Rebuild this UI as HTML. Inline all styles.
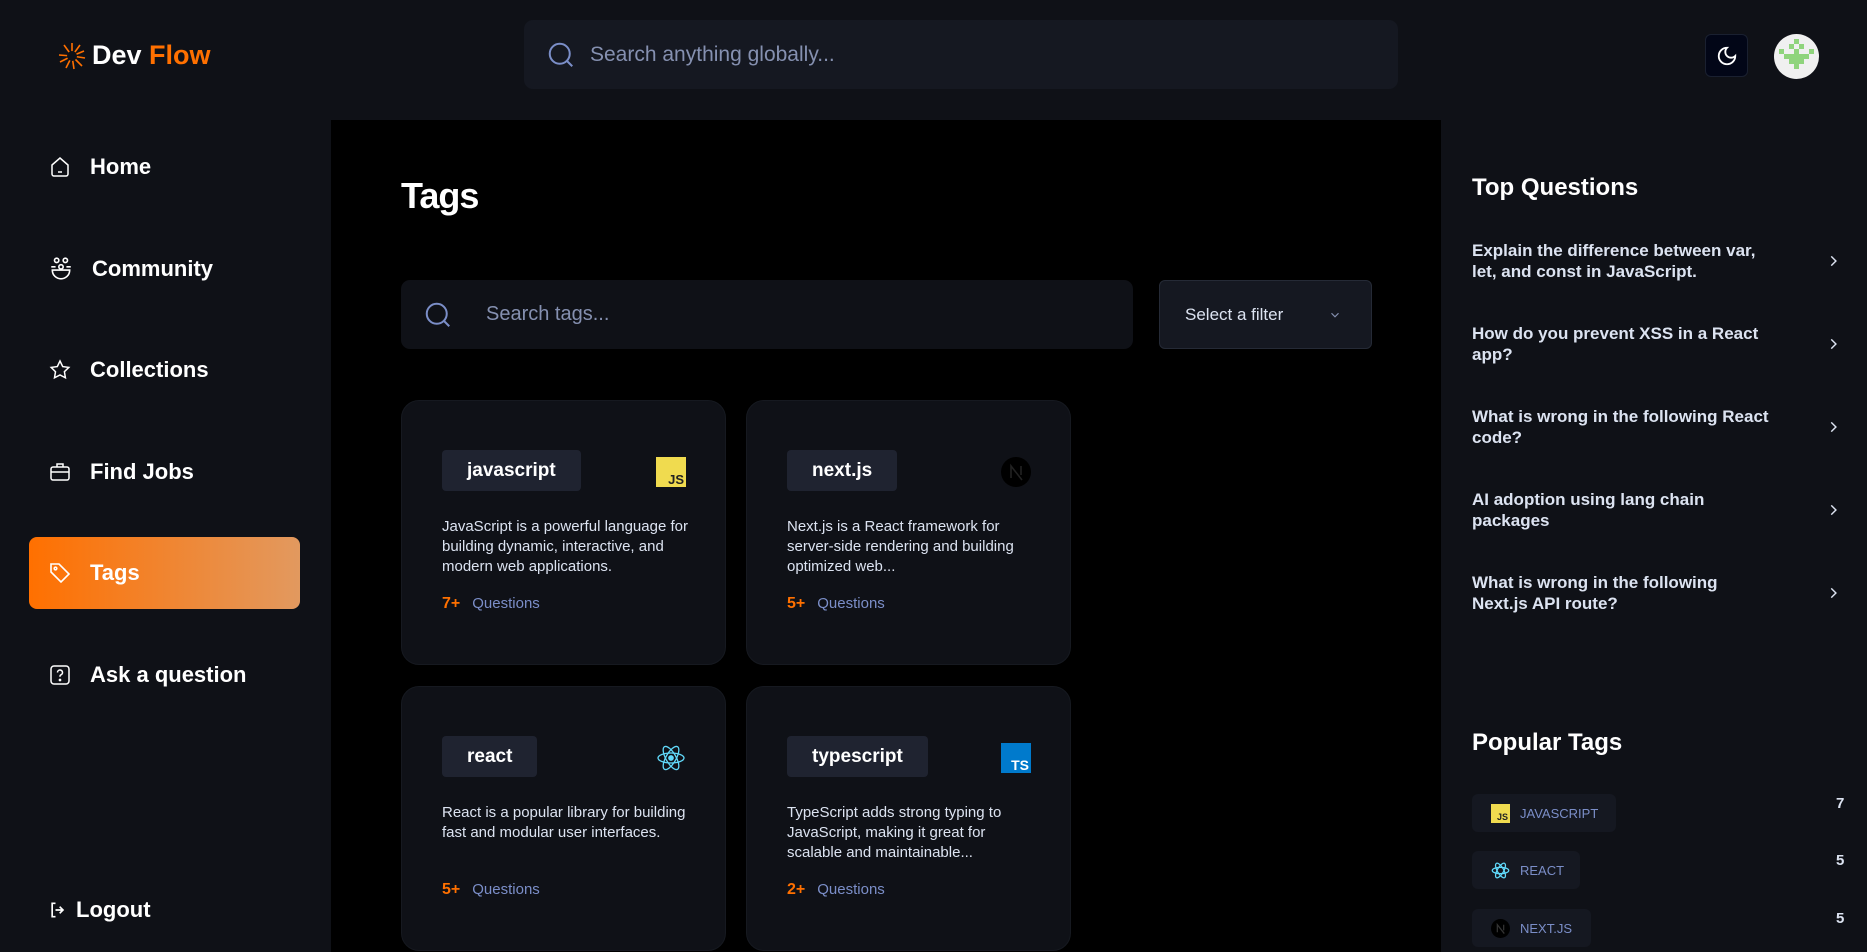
<!DOCTYPE html>
<html><head><meta charset="utf-8"><style>
*{box-sizing:border-box;margin:0;padding:0}
body{width:1867px;height:952px;overflow:hidden;background:#0f1117;font-family:"Liberation Sans",sans-serif;color:#fff;position:relative}
.abs{position:absolute}
.logo{left:58px;top:40px;font-size:27px;font-weight:bold;display:flex;align-items:center;gap:6px}
.gs{left:524px;top:20px;width:874px;height:69px;background:#151821;border-radius:9px;display:flex;align-items:center;padding-left:22px;color:#8590b0;font-size:21px;gap:14px}
.moon{left:1705px;top:34px;width:43px;height:43px;background:#020617;border:1px solid #1a2030;border-radius:6px;display:flex;align-items:center;justify-content:center}
.av{left:1774px;top:34px;width:45px;height:45px;border-radius:50%;background:#f0f0f0;overflow:hidden}
.nav{left:48px;display:flex;align-items:center;gap:18px;font-size:22px;font-weight:bold;color:#fff;height:30px}
.active{left:29px;top:537px;width:271px;height:72px;border-radius:8px;background:linear-gradient(90deg,#ff7000,#e2995f)}
.main{left:331px;top:120px;width:1110px;height:832px;background:#000}
h1{position:absolute;left:401px;top:175px;font-size:36px;font-weight:bold;letter-spacing:-1px}
.ts{left:401px;top:280px;width:732px;height:69px;background:#0f1117;border-radius:9px;display:flex;align-items:center;padding-left:22px;color:#8590b0;font-size:20px}
.flt{left:1159px;top:280px;width:213px;height:69px;background:#151821;border:1px solid #252a36;border-radius:6px;display:flex;align-items:center;padding-left:25px;font-size:17px;color:#dce3f1}
.card{width:325px;height:265px;background:#0f1117;border:1px solid #161920;border-radius:18px}
.badge{position:absolute;left:40px;top:49px;height:41px;background:#1f2330;border-radius:4px;padding:0 25px;font-size:19px;font-weight:bold;line-height:41px;color:#fff}
.ic{position:absolute;left:254px;top:56px;width:30px;height:30px}
.desc{position:absolute;left:40px;top:116px;width:248px;font-size:15px;line-height:20px;color:#dce3f1}
.q{position:absolute;left:40px;top:194px;font-size:16px;color:#ff7000;font-weight:bold}
.q span{color:#7b8ec8;font-weight:normal;font-size:15px;margin-left:12px}
.rh{left:1472px;font-size:24px;font-weight:bold}
.tq{left:1472px;width:300px;font-size:17px;line-height:21px;font-weight:bold;color:#dce3f1}
.chev{left:1826px;width:14px;height:14px}
.pt{left:1472px;height:38px;background:#151821;border-radius:6px;display:flex;align-items:center;padding-left:19px;gap:10px;font-size:13px;color:#7b8ec8}
.cnt{left:1836px;font-size:15px;font-weight:bold;color:#dce3f1}
.js{background:#f0db4f;color:#222;font-weight:bold;display:flex;align-items:flex-end;justify-content:flex-end;font-size:13px;padding:0 2px 1px 0;line-height:1}
</style></head><body>
<div class="abs logo"><svg width="28" height="28" viewBox="0 0 28 28"><g stroke="#ff7000" stroke-width="1.6"><line x1="14" y1="14" x2="14" y2="1"/><line x1="14" y1="14" x2="22" y2="3"/><line x1="14" y1="14" x2="26" y2="9"/><line x1="14" y1="14" x2="27" y2="16"/><line x1="14" y1="14" x2="24" y2="24"/><line x1="14" y1="14" x2="16" y2="27"/><line x1="14" y1="14" x2="8" y2="26"/><line x1="14" y1="14" x2="2" y2="20"/><line x1="14" y1="14" x2="1" y2="13"/><line x1="14" y1="14" x2="6" y2="3"/></g><circle cx="14" cy="14" r="5" fill="#0f1117"/></svg><span>Dev <span style="color:#ff7000">Flow</span></span></div>
<div class="abs gs"><svg width="30" height="30" viewBox="0 0 24 24" fill="none" stroke="#7b8ec8" stroke-width="1.6"><circle cx="11" cy="11" r="8"/><path d="M17 17l4 4"/></svg>Search anything globally...</div>
<div class="abs moon"><svg width="22" height="22" viewBox="0 0 24 24" fill="none" stroke="#fff" stroke-width="2"><path d="M12 3a6 6 0 0 0 9 9 9 9 0 1 1-9-9z"/></svg></div>
<div class="abs av"><svg width="45" height="45" viewBox="0 0 9 9"><g fill="#8fd47c"><rect x="4" y="1" width="1" height="1"/><rect x="3" y="2" width="1" height="1"/><rect x="5" y="2" width="1" height="1"/><rect x="1" y="3" width="1" height="1"/><rect x="4" y="3" width="1" height="1"/><rect x="7" y="3" width="1" height="1"/><rect x="2" y="4" width="5" height="1"/><rect x="3" y="5" width="3" height="1"/><rect x="4" y="6" width="1" height="1"/></g></svg></div>

<div class="abs active"></div>
<div class="abs nav" style="top:152px"><svg width="24" height="24" viewBox="0 0 24 24" fill="none" stroke="#fff" stroke-width="1.5"><path d="M4 10l8-7 8 7v9a2 2 0 0 1-2 2H6a2 2 0 0 1-2-2z"/><path d="M10 17h4"/></svg>Home</div>
<div class="abs nav" style="top:254px"><svg width="26" height="26" viewBox="0 0 24 24" fill="none" stroke="#fff" stroke-width="1.5"><circle cx="8" cy="4" r="2"/><circle cx="16" cy="4" r="2"/><circle cx="12" cy="10" r="2"/><path d="M3 10h4M17 10h4M4 13h16c0 5-4 8-8 8s-8-3-8-8z"/></svg>Community</div>
<div class="abs nav" style="top:355px"><svg width="24" height="24" viewBox="0 0 24 24" fill="none" stroke="#fff" stroke-width="1.5"><path d="M12 3l2.7 5.6 6.1.8-4.4 4.3 1 6.1L12 17l-5.5 2.8 1-6.1L3.2 9.4l6.1-.8z"/></svg>Collections</div>
<div class="abs nav" style="top:457px"><svg width="24" height="24" viewBox="0 0 24 24" fill="none" stroke="#fff" stroke-width="1.5"><rect x="3" y="7" width="18" height="13" rx="2"/><path d="M9 7V4h6v3M3 12h18"/></svg>Find Jobs</div>
<div class="abs nav" style="top:558px"><svg width="24" height="24" viewBox="0 0 24 24" fill="none" stroke="#fff" stroke-width="1.6"><path d="M3 3h8l10 10-8 8L3 11z"/><circle cx="7.5" cy="7.5" r="1.3"/></svg>Tags</div>
<div class="abs nav" style="top:660px"><svg width="24" height="24" viewBox="0 0 24 24" fill="none" stroke="#fff" stroke-width="1.5"><rect x="3" y="3" width="18" height="18" rx="3"/><path d="M9.5 9.5a2.5 2.5 0 1 1 3.5 2.3c-.7.3-1 .8-1 1.5v.5"/><circle cx="12" cy="17" r=".6" fill="#fff"/></svg>Ask a question</div>
<div class="abs nav" style="top:895px;gap:8px"><svg width="20" height="20" viewBox="0 0 24 24" fill="none" stroke="#fff" stroke-width="2"><path d="M9 4H5v16h4M14 8l4 4-4 4M18 12H9"/></svg>Logout</div>

<div class="abs main"></div>
<h1>Tags</h1>
<div class="abs ts"><svg width="30" height="30" viewBox="0 0 24 24" fill="none" stroke="#7b8ec8" stroke-width="1.6"><circle cx="11" cy="11" r="8"/><path d="M17 17l4 4"/></svg><span style="margin-left:33px">Search tags...</span></div>
<div class="abs flt">Select a filter<svg style="margin-left:45px" width="14" height="14" viewBox="0 0 24 24" fill="none" stroke="#8590b0" stroke-width="2"><path d="M6 9l6 6 6-6"/></svg></div>

<div class="abs card" style="left:401px;top:400px"><div class="badge">javascript</div><div class="ic js">JS</div><div class="desc">JavaScript is a powerful language for building dynamic, interactive, and modern web applications.</div><div class="q">7+<span>Questions</span></div></div>
<div class="abs card" style="left:746px;top:400px"><div class="badge">next.js</div><svg class="ic" viewBox="0 0 30 30"><circle cx="15" cy="15" r="15" fill="#000"/><path d="M10 21V9l11 14M20 9v9" stroke="#222" stroke-width="1.6" fill="none"/></svg><div class="desc">Next.js is a React framework for server-side rendering and building optimized web...</div><div class="q">5+<span>Questions</span></div></div>
<div class="abs card" style="left:401px;top:686px"><div class="badge">react</div><svg class="ic" viewBox="0 0 30 30" fill="none" stroke="#61dafb" stroke-width="1.3"><ellipse cx="15" cy="15" rx="13" ry="5"/><ellipse cx="15" cy="15" rx="13" ry="5" transform="rotate(60 15 15)"/><ellipse cx="15" cy="15" rx="13" ry="5" transform="rotate(120 15 15)"/><circle cx="15" cy="15" r="2.2" fill="#61dafb"/></svg><div class="desc">React is a popular library for building fast and modular user interfaces.</div><div class="q">5+<span>Questions</span></div></div>
<div class="abs card" style="left:746px;top:686px"><div class="badge">typescript</div><div class="ic" style="background:#007acc;color:#fff;font-weight:bold;font-size:14px;display:flex;align-items:flex-end;justify-content:flex-end;padding:0 2px 1px 0;line-height:1">TS</div><div class="desc">TypeScript adds strong typing to JavaScript, making it great for scalable and maintainable...</div><div class="q">2+<span>Questions</span></div></div>

<div class="abs rh" style="top:174px">Top Questions</div>
<div class="abs tq" style="top:240px">Explain the difference between var, let, and const in JavaScript.</div>
<div class="abs tq" style="top:323px">How do you prevent XSS in a React app?</div>
<div class="abs tq" style="top:406px">What is wrong in the following React code?</div>
<div class="abs tq" style="top:489px">AI adoption using lang chain packages</div>
<div class="abs tq" style="top:572px">What is wrong in the following Next.js API route?</div>
<svg class="abs chev" style="top:254px" viewBox="0 0 24 24" fill="none" stroke="#dce3f1" stroke-width="2.5"><path d="M9 4l8 8-8 8"/></svg>
<svg class="abs chev" style="top:337px" viewBox="0 0 24 24" fill="none" stroke="#dce3f1" stroke-width="2.5"><path d="M9 4l8 8-8 8"/></svg>
<svg class="abs chev" style="top:420px" viewBox="0 0 24 24" fill="none" stroke="#dce3f1" stroke-width="2.5"><path d="M9 4l8 8-8 8"/></svg>
<svg class="abs chev" style="top:503px" viewBox="0 0 24 24" fill="none" stroke="#dce3f1" stroke-width="2.5"><path d="M9 4l8 8-8 8"/></svg>
<svg class="abs chev" style="top:586px" viewBox="0 0 24 24" fill="none" stroke="#dce3f1" stroke-width="2.5"><path d="M9 4l8 8-8 8"/></svg>

<div class="abs rh" style="top:729px">Popular Tags</div>
<div class="abs pt" style="top:794px;width:144px"><div class="js" style="width:19px;height:19px;font-size:9px">JS</div>JAVASCRIPT</div>
<div class="abs pt" style="top:851px;width:108px"><svg width="19" height="19" viewBox="0 0 30 30" fill="none" stroke="#61dafb" stroke-width="2"><ellipse cx="15" cy="15" rx="13" ry="5"/><ellipse cx="15" cy="15" rx="13" ry="5" transform="rotate(60 15 15)"/><ellipse cx="15" cy="15" rx="13" ry="5" transform="rotate(120 15 15)"/></svg>REACT</div>
<div class="abs pt" style="top:909px;width:119px"><svg width="19" height="19" viewBox="0 0 30 30"><circle cx="15" cy="15" r="15" fill="#000"/><path d="M10 21V9l11 14M20 9v9" stroke="#333" stroke-width="2" fill="none"/></svg>NEXT.JS</div>
<div class="abs cnt" style="top:795px">7</div>
<div class="abs cnt" style="top:852px">5</div>
<div class="abs cnt" style="top:910px">5</div>
</body></html>
